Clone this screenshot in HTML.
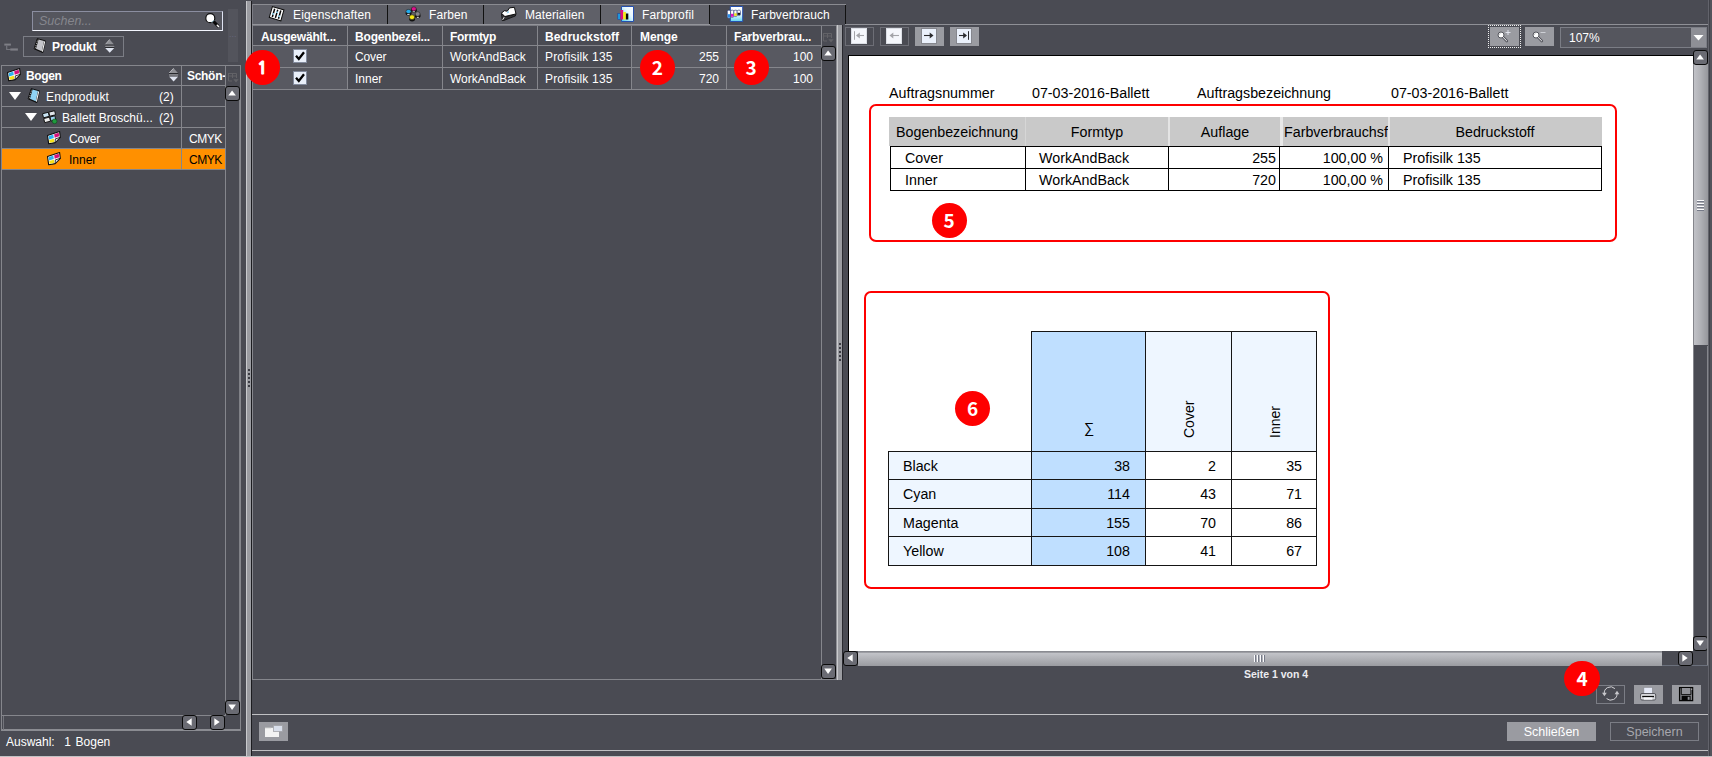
<!DOCTYPE html>
<html><head><meta charset="utf-8"><title>Farbverbrauch</title>
<style>
html,body{margin:0;padding:0}
body{width:1712px;height:757px;overflow:hidden;background:#4a4b53;position:relative;font-family:"Liberation Sans",sans-serif;font-size:12px;color:#fff}
.a{position:absolute;box-sizing:border-box}
.t{position:absolute;white-space:pre;line-height:14px}
.b{font-weight:bold}
.gl{position:absolute;background:#85868c}
.arr{position:absolute;box-sizing:border-box;width:15px;height:15px;border:1.5px solid #0a0a0a;border-radius:3px;background:#6a6b73}
.arr svg{position:absolute;left:0;top:0}
.circ{position:absolute;width:35.200px;height:35.200px;border-radius:50%;background:#fe0000;color:#fff;font-weight:bold;font-size:19px;line-height:33.500px;text-align:center;font-family:"Noto Sans CJK SC","Liberation Sans",sans-serif}
.rep{color:#000;font-size:14.27px;line-height:16px}
</style></head><body>

<!-- LEFT PANEL -->
<div id="left">
<div class="a" style="left:32px;top:11px;width:191px;height:20px;background:#55565e;border:1px solid;border-color:#8b8ea0 #dfe3f2 #f4f6ff #8b8ea0"></div>
<div class="t" style="left:39px;top:14px;font-style:italic;font-size:12.500px;color:#85868d">Suchen...</div>
<svg class="a" style="left:203px;top:12px" width="18" height="18" viewBox="0 0 18 18"><path d="M10.800 9.800 L15 14" stroke="#080808" stroke-width="3" stroke-linecap="round"/><circle cx="7.300" cy="6.200" r="4.500" fill="#fff" stroke="#101010" stroke-width="1.200"/><path d="M8.500 10.200a4.500 4.500 0 0 0 2.600-2" stroke="#7fa9b8" stroke-width="1" fill="none"/><path d="M14.300 13.300l1.200 1.200" stroke="#fff" stroke-width="1.600" stroke-linecap="round"/></svg>
<div class="a" style="left:228px;top:9px;width:10px;height:53px;background:#53545c"></div>
<div class="t" style="left:229px;top:27px;font-size:9px;color:#63657a;letter-spacing:0">...</div>
<svg class="a" style="left:4px;top:42px" width="15" height="10" viewBox="0 0 15 10"><path d="M.3 2.600h6.600" stroke="#7e7f86" stroke-width="2" fill="none"/><path d="M2.700 3.600v3.900h4" stroke="#74757d" stroke-width="1.200" fill="none"/><path d="M6.300 7.500h7.600" stroke="#7e7f86" stroke-width="2.200" fill="none"/></svg>
<div class="a" style="left:23px;top:36px;width:101px;height:21px;border:1px solid #7b7d85"></div>
<svg class="a" style="left:33px;top:38px" width="14" height="16" viewBox="0 0 14 16"><path d="M4.300 .700 L12.400 2.900 L9.800 14.600 L1.100 10.800 Z" fill="#111" stroke="#0a0a0a" stroke-width=".9" stroke-linejoin="round"/><path d="M5.600 1.600 L11 3.100 L8.700 13.300 L3 10.800 Z" fill="#c4c5ca"/><path d="M2.100 10.400 L4.900 1.400" stroke="#e8e8e8" stroke-width=".7" stroke-dasharray="1.300 1"/><path d="M11.700 3.300 L9.400 13.700" stroke="#f4f4f4" stroke-width="1.100"/></svg>
<div class="t b" style="left:52px;top:40px;letter-spacing:-.12px">Produkt</div>
<svg class="a" style="left:104px;top:38px" width="12" height="16" viewBox="0 0 12 16"><path d="M1.200 6.700 L5.700 1.400 L10.300 6.700Z" fill="#8e8f95"/><path d="M1.400 6.400 L5.700 1.400" stroke="#c8c9ce" stroke-width=".8"/><path d="M1.200 7.100h9.100M1.200 9.600h9.100" stroke="#15151a" stroke-width=".9"/><rect x="1.200" y="7.600" width="9.100" height="1.500" fill="#8e8f95"/><path d="M1.200 10.100 L5.700 14.800 L10.300 10.100Z" fill="#dfe4f0"/></svg>

<!-- tree table -->
<div class="a" style="left:1px;top:65px;width:240px;height:666px;border:1px solid #85868c;border-bottom:2px solid #8b8c92"></div>
<div class="gl" style="left:3px;top:716px;width:1px;height:14px;background:#74757c"></div>
<div class="a" style="left:2px;top:149px;width:224px;height:20px;background:#ff9000"></div>
<div class="gl" style="left:2px;top:85px;width:224px;height:1px"></div>
<div class="gl" style="left:2px;top:106px;width:224px;height:1px"></div>
<div class="gl" style="left:2px;top:127px;width:224px;height:1px"></div>
<div class="gl" style="left:2px;top:148px;width:224px;height:1px"></div>
<div class="gl" style="left:2px;top:169px;width:224px;height:1px"></div>
<div class="gl" style="left:181px;top:66px;width:1px;height:104px"></div>
<div class="gl" style="left:225px;top:66px;width:1px;height:650px"></div>
<div class="gl" style="left:2px;top:715px;width:224px;height:1px"></div>
<div class="gl" style="left:239px;top:100px;width:1px;height:602px;background:#808187"></div>

<svg class="a" style="left:5px;top:67px" width="17" height="17" viewBox="0 0 17 17" id="bogico"><path d="M2.500 5.500 L14.600 1.500 L15.300 7.300 L10.200 12.600 L3.700 13.800 Z" fill="#fff" stroke="#0c0c0c" stroke-width="1.100" stroke-linejoin="round"/><path d="M3.600 6.200 L8.300 4.600 L8.800 8 L4.100 9.400Z" fill="#2fb1ee"/><path d="M9.200 4.300 L13.700 2.800 L14.200 6.300 L9.700 7.700Z" fill="#d5107c"/><path d="M4.200 10.100 L8.900 8.700 L9.300 11.900 L4.700 12.800Z" fill="#f6e21a"/><path d="M15.300 7.300 L10.200 12.600 L10.300 8.900 Z" fill="#e9e9e9" stroke="#0c0c0c" stroke-width=".8" stroke-linejoin="round"/></svg>
<div class="t b" style="left:26px;top:69px;letter-spacing:-.38px">Bogen</div>
<svg class="a" style="left:168px;top:67px" width="12" height="16" viewBox="0 0 12 16"><path d="M1 6.300 L5.600 1.300 L10.200 6.300Z" fill="#8e8f95"/><path d="M1.200 6 L5.600 1.300" stroke="#c8c9ce" stroke-width=".8"/><path d="M1 6.700h9.200M1 9.200h9.200" stroke="#15151a" stroke-width=".9"/><rect x="1" y="7.200" width="9.200" height="1.500" fill="#8e8f95"/><path d="M1 9.600 L5.600 14.600 L10.200 9.600Z" fill="#dfe4f0"/></svg>
<div class="t b" style="left:187px;top:69px;width:38px;overflow:hidden;letter-spacing:-.3px">Schön-</div>
<svg class="a" style="left:227px;top:72px" width="13" height="12" viewBox="0 0 13 12"><path d="M1 1.500h8.500M1 4h8.500M1.500 1.500v7.500h3.500M5.500 1.500v4.500M9.500 1.500v4.500" stroke="#626267" fill="none" stroke-width="1"/><path d="M6.300 7.300h5.400l-2.700 3.200z" fill="#626267"/></svg>

<svg class="a" style="left:8px;top:91px" width="14" height="10" viewBox="0 0 14 10"><path d="M1 1h12L7 9z" fill="#fff"/></svg>
<svg class="a" style="left:27px;top:88px" width="14" height="16" viewBox="0 0 14 16"><path d="M4.300 .700 L12.400 2.900 L9.800 14.600 L1.100 10.800 Z" fill="#111" stroke="#0a0a0a" stroke-width=".9" stroke-linejoin="round"/><path d="M5.600 1.600 L11 3.100 L8.700 13.300 L3 10.800 Z" fill="#8fd3f4"/><path d="M2.100 10.400 L4.900 1.400" stroke="#e8e8e8" stroke-width=".7" stroke-dasharray="1.300 1"/><path d="M11.700 3.300 L9.400 13.700" stroke="#f4f4f4" stroke-width="1.100"/></svg>
<div class="t" style="left:46px;top:90px;letter-spacing:.17px">Endprodukt</div>
<div class="t" style="left:159px;top:90px">(2)</div>

<svg class="a" style="left:24px;top:112px" width="14" height="10" viewBox="0 0 14 10"><path d="M1 1h12L7 9z" fill="#fff"/></svg>
<svg class="a" style="left:42px;top:109px" width="17" height="17" viewBox="0 0 17 17"><g transform="rotate(-14 8 8)"><rect x="1.5" y="3" width="6" height="4.2" fill="#c9e4f4" stroke="#111" stroke-width=".9"/><rect x="8" y="3" width="6" height="4.2" fill="#dfe3e8" stroke="#111" stroke-width=".9"/><rect x="1.5" y="8" width="6" height="4.2" fill="#eee" stroke="#111" stroke-width=".9"/><rect x="8" y="8" width="5" height="4.2" fill="#9fd0ee" stroke="#111" stroke-width=".9"/></g><circle cx="12.6" cy="12.3" r="2.4" fill="#1f9a3d" stroke="#0b4d1c" stroke-width=".6"/></svg>
<div class="t" style="left:62px;top:111px">Ballett Broschü...</div>
<div class="t" style="left:159px;top:111px">(2)</div>

<svg class="a" style="left:45px;top:130px" width="17" height="17" viewBox="0 0 17 17"><path d="M2.500 5.500 L14.600 1.500 L15.300 7.300 L10.200 12.600 L3.700 13.800 Z" fill="#fff" stroke="#0c0c0c" stroke-width="1.100" stroke-linejoin="round"/><path d="M3.600 6.200 L8.300 4.600 L8.800 8 L4.100 9.400Z" fill="#2fb1ee"/><path d="M9.200 4.300 L13.700 2.800 L14.200 6.300 L9.700 7.700Z" fill="#d5107c"/><path d="M4.200 10.100 L8.900 8.700 L9.300 11.900 L4.700 12.800Z" fill="#f6e21a"/><path d="M15.300 7.300 L10.200 12.600 L10.300 8.900 Z" fill="#e9e9e9" stroke="#0c0c0c" stroke-width=".8" stroke-linejoin="round"/></svg>
<div class="t" style="left:69px;top:132px;letter-spacing:-.18px">Cover</div>
<div class="t" style="left:189px;top:132px;letter-spacing:-.5px">CMYK</div>

<svg class="a" style="left:45px;top:151px" width="17" height="17" viewBox="0 0 17 17"><path d="M2.500 5.500 L14.600 1.500 L15.300 7.300 L10.200 12.600 L3.700 13.800 Z" fill="#fff" stroke="#0c0c0c" stroke-width="1.100" stroke-linejoin="round"/><path d="M3.600 6.200 L8.300 4.600 L8.800 8 L4.100 9.400Z" fill="#2fb1ee"/><path d="M9.200 4.300 L13.700 2.800 L14.200 6.300 L9.700 7.700Z" fill="#d5107c"/><path d="M4.200 10.100 L8.900 8.700 L9.300 11.900 L4.700 12.800Z" fill="#f6e21a"/><path d="M15.300 7.300 L10.200 12.600 L10.300 8.900 Z" fill="#e9e9e9" stroke="#0c0c0c" stroke-width=".8" stroke-linejoin="round"/></svg>
<div class="t" style="left:69px;top:153px;color:#000">Inner</div>
<div class="t" style="left:189px;top:153px;color:#000;letter-spacing:-.5px">CMYK</div>

<div class="arr" style="left:225px;top:86px"><svg width="12" height="12" viewBox="0 0 12 12"><path d="M2.300 8.600 L6.100 3.400 L9.900 8.600Z" fill="#fff"/></svg></div>
<div class="arr" style="left:225px;top:700px"><svg width="12" height="12" viewBox="0 0 12 12"><path d="M2.300 3.600 L6.100 8.900 L9.900 3.600Z" fill="#fff"/></svg></div>
<div class="arr" style="left:182px;top:715px"><svg width="12" height="12" viewBox="0 0 12 12"><path d="M8.700 2.200 L3.300 6 L8.700 9.800Z" fill="#fff"/></svg></div>
<div class="arr" style="left:210px;top:715px"><svg width="12" height="12" viewBox="0 0 12 12"><path d="M3.300 2.200 L8.700 6 L3.300 9.800Z" fill="#fff"/></svg></div>

<div class="t" style="left:6px;top:735px;word-spacing:1.400px">Auswahl:  1 Bogen</div>
</div>

<!-- splitter 1 -->
<div class="a" style="left:246px;top:1px;width:6px;height:755px;background:linear-gradient(90deg,#c9cacd 0,#c9cacd 1px,#9b9ca1 1px,#9b9ca1 5px,#1c1c20 5px,#1c1c20 6px)"></div>
<div class="a" style="left:248px;top:369px;width:2px;height:2px;background:#3c3d44;box-shadow:0 4px 0 #3c3d44,0 8px 0 #3c3d44,0 12px 0 #3c3d44,0 16px 0 #3c3d44"></div>


<!-- MIDDLE PANEL -->
<div id="mid">
<!-- tabs -->
<div class="a" style="left:252px;top:4px;width:594px;height:21px;background:#5f6068;border-top:1px solid #8a8b91"></div>
<div class="a" style="left:601px;top:5px;width:109px;height:20px;background:#65666e"></div>
<div class="a" style="left:710px;top:5px;width:135px;height:20px;background:#4a4b53"></div>
<div class="a" style="left:252px;top:4px;width:1px;height:21px;background:#7b7c84"></div>
<div class="a" style="left:387px;top:5px;width:1px;height:20px;background:#111"></div>
<div class="a" style="left:483px;top:5px;width:1px;height:20px;background:#111"></div>
<div class="a" style="left:600px;top:5px;width:1px;height:20px;background:#111"></div>
<div class="a" style="left:709px;top:5px;width:1px;height:20px;background:#111"></div>
<div class="a" style="left:845px;top:5px;width:1px;height:20px;background:#111"></div>
<div class="gl" style="left:252px;top:24px;width:458px;height:1px;background:#93949a"></div>
<div class="gl" style="left:252px;top:25px;width:584px;height:1px;background:#7a7b82"></div>
<div class="gl" style="left:845px;top:24px;width:863px;height:1px;background:#8f9096"></div>

<div class="t" style="left:293px;top:8px;letter-spacing:.16px">Eigenschaften</div>
<div class="t" style="left:429px;top:8px;letter-spacing:.08px">Farben</div>
<div class="t" style="left:525px;top:8px;letter-spacing:.07px">Materialien</div>
<div class="t" style="left:642px;top:8px;letter-spacing:.13px">Farbprofil</div>
<div class="t" style="left:751px;top:8px;letter-spacing:.05px">Farbverbrauch</div>

<!-- tab icons -->
<svg class="a" style="left:268px;top:4px" width="19" height="20" viewBox="0 0 19 20"><g transform="translate(4.400 2.600) rotate(16)"><rect x="0" y="0" width="12" height="11.300" fill="#fff" stroke="#0c0c0c" stroke-width="1"/><path d="M2.800 1.500v8.500M6 1.500v8.500M9.200 1.500v8.500" stroke="#0a0a0a" stroke-width="1.500"/><rect x="1.800" y="6" width="2" height="1.600" fill="#8fd4f0"/><rect x="5" y="3.300" width="2" height="1.600" fill="#8fd4f0"/><rect x="8.200" y="6.500" width="2" height="1.600" fill="#8fd4f0"/></g></svg>
<svg class="a" style="left:404px;top:4px" width="19" height="19" viewBox="0 0 19 19"><ellipse cx="9.800" cy="6.300" rx="3" ry="2.400" fill="#111"/><ellipse cx="4.600" cy="9.200" rx="3" ry="2.400" fill="#111"/><ellipse cx="13.600" cy="11.800" rx="3" ry="2.400" fill="#111"/><ellipse cx="8.100" cy="15" rx="3" ry="2.400" fill="#111"/><path d="M8.700 7.700h2.200M3.300 10.600l2.400-.4M12.800 13.300h2" stroke="#f4f4f4" stroke-width="1"/><ellipse cx="9.800" cy="4.900" rx="2.500" ry="2.100" fill="#e0108c" stroke="#222" stroke-width=".6"/><ellipse cx="4.500" cy="7.500" rx="2.600" ry="2.100" fill="#22aef0" stroke="#222" stroke-width=".6"/><ellipse cx="13.600" cy="10" rx="2.500" ry="2.300" fill="#858589" stroke="#222" stroke-width=".6"/><ellipse cx="8" cy="13.200" rx="2.600" ry="2.400" fill="#f8ea10" stroke="#222" stroke-width=".6"/></svg>
<svg class="a" style="left:499px;top:5px" width="19" height="18" viewBox="0 0 19 18"><path d="M2.400 8.200 L5.900 11.500 L17 8.900 L16.300 11 L5 15.400 L3.300 15.600 Z" fill="#333336" stroke="#0c0c0c" stroke-width=".8" stroke-linejoin="round"/><path d="M3.600 14.800l1.600-2.600" stroke="#f0f0f0" stroke-width="1"/><path d="M2.400 8.200 L5.300 5.700 L8.300 6.200 L10.500 2.900 L15.400 2.300 L17 8.900 L5.900 11.500 Z" fill="#fff" stroke="#0c0c0c" stroke-width="1" stroke-linejoin="round"/><path d="M7.400 8.500 L9.400 5.400 L10 7.700 Z" fill="#8fd0f0"/></svg>
<svg class="a" style="left:617px;top:5px" width="18" height="18" viewBox="0 0 18 18"><defs><linearGradient id="pg" x1="0" y1="1" x2="1" y2="0"><stop offset="0" stop-color="#4fd0f0"/><stop offset=".6" stop-color="#e8f8ff"/><stop offset="1" stop-color="#fff"/></linearGradient></defs><path d="M4.500 1.500h12v15h-12z" fill="url(#pg)" stroke="#2450b0" stroke-width="1"/><rect x=".8" y="8.500" width="2.700" height="6" fill="#1c9be0" stroke="#1a3c9a" stroke-width=".5"/><rect x="3.500" y="5" width="2.700" height="9.500" fill="#e0107c"/><rect x="6.200" y="7" width="2.700" height="7.500" fill="#f8e810"/><rect x="8.900" y="8.500" width="2.400" height="6" fill="#0a0a0a"/></svg>
<svg class="a" style="left:726px;top:5px" width="18" height="18" viewBox="0 0 18 18"><defs><linearGradient id="pg2" x1="0" y1="0" x2="0" y2="1"><stop offset="0" stop-color="#fff"/><stop offset=".5" stop-color="#eefaff"/><stop offset="1" stop-color="#5fd4f2"/></linearGradient></defs><path d="M4.300 1.500h12.400v15h-12.400z" fill="url(#pg2)" stroke="#2450b0" stroke-width="1"/><rect x="1.3" y="5.2" width="3.300" height="8.0" rx="1.200" fill="#fff" stroke="#1a2a6a" stroke-width=".6"/><rect x="1.7" y="9.2" width="2.500" height="3.5" fill="#2a8ce6"/><rect x="4.6" y="5.2" width="3.300" height="7.1" rx="1.200" fill="#fff" stroke="#1a2a6a" stroke-width=".6"/><rect x="5.0" y="8.8" width="2.500" height="3.0" fill="#e810c8"/><rect x="7.9" y="5.2" width="3.300" height="6.2" rx="1.200" fill="#fff" stroke="#1a2a6a" stroke-width=".6"/><rect x="8.3" y="8.3" width="2.500" height="2.6" fill="#f6e010"/><rect x="11.2" y="5.2" width="3.300" height="5.3" rx="1.200" fill="#fff" stroke="#1a2a6a" stroke-width=".6"/><rect x="11.6" y="7.8" width="2.500" height="2.1" fill="#111"/></svg>

<!-- table panel -->
<div class="a" style="left:252px;top:25px;width:585px;height:655px;border:1px solid #85868c;border-top:none"></div>
<div class="a" style="left:253px;top:46px;width:94px;height:43px;background:#585961"></div>
<div class="a" style="left:632px;top:46px;width:189px;height:43px;background:#585961"></div>
<div class="gl" style="left:253px;top:45px;width:568px;height:1px"></div>
<div class="gl" style="left:253px;top:67px;width:568px;height:1px"></div>
<div class="gl" style="left:253px;top:89px;width:568px;height:1px"></div>
<div class="gl" style="left:347px;top:26px;width:1px;height:64px"></div>
<div class="gl" style="left:442px;top:26px;width:1px;height:64px"></div>
<div class="gl" style="left:537px;top:26px;width:1px;height:64px"></div>
<div class="gl" style="left:631px;top:26px;width:1px;height:64px"></div>
<div class="gl" style="left:726px;top:26px;width:1px;height:64px"></div>
<div class="gl" style="left:821px;top:26px;width:1px;height:654px"></div>

<div class="t b" style="left:261px;top:30px;letter-spacing:-.18px">Ausgewählt...</div>
<div class="t b" style="left:355px;top:30px;letter-spacing:-.18px">Bogenbezei...</div>
<div class="t b" style="left:450px;top:30px;letter-spacing:-.28px">Formtyp</div>
<div class="t b" style="left:545px;top:30px;letter-spacing:0px">Bedruckstoff</div>
<div class="t b" style="left:640px;top:30px;letter-spacing:-.06px">Menge</div>
<div class="t b" style="left:734px;top:30px;letter-spacing:-.2px">Farbverbrau...</div>

<div class="t" style="left:355px;top:50px;letter-spacing:-.15px">Cover</div>
<div class="t" style="left:450px;top:50px">WorkAndBack</div>
<div class="t" style="left:545px;top:50px;letter-spacing:.17px">Profisilk 135</div>
<div class="t" style="left:660px;top:50px;width:59px;text-align:right">255</div>
<div class="t" style="left:754px;top:50px;width:59px;text-align:right">100</div>
<div class="t" style="left:355px;top:72px">Inner</div>
<div class="t" style="left:450px;top:72px">WorkAndBack</div>
<div class="t" style="left:545px;top:72px;letter-spacing:.17px">Profisilk 135</div>
<div class="t" style="left:660px;top:72px;width:59px;text-align:right">720</div>
<div class="t" style="left:754px;top:72px;width:59px;text-align:right">100</div>

<div class="a" style="left:293px;top:49px;width:14px;height:14px;background:#e9eff9;border:1px solid #828a9c"></div>
<svg class="a" style="left:294px;top:50px" width="12" height="12" viewBox="0 0 12 12"><path d="M2 5.800 L4.800 9 L10 2.300" stroke="#000" stroke-width="2.300" fill="none"/></svg>
<div class="a" style="left:293px;top:71px;width:14px;height:14px;background:#e9eff9;border:1px solid #828a9c"></div>
<svg class="a" style="left:294px;top:72px" width="12" height="12" viewBox="0 0 12 12"><path d="M2 5.800 L4.800 9 L10 2.300" stroke="#000" stroke-width="2.300" fill="none"/></svg>

<svg class="a" style="left:822px;top:32px" width="13" height="12" viewBox="0 0 13 12"><path d="M1 1.500h8.500M1 4h8.500M1.500 1.500v7.500h3.500M5.500 1.500v4.500M9.500 1.500v4.500" stroke="#626267" fill="none" stroke-width="1"/><path d="M6.300 7.300h5.400l-2.700 3.200z" fill="#626267"/></svg>
<div class="arr" style="left:821px;top:46px"><svg width="12" height="12" viewBox="0 0 12 12"><path d="M2.300 8.600 L6.100 3.400 L9.900 8.600Z" fill="#fff"/></svg></div>
<div class="arr" style="left:821px;top:664px"><svg width="12" height="12" viewBox="0 0 12 12"><path d="M2.300 3.600 L6.100 8.900 L9.900 3.600Z" fill="#fff"/></svg></div>

<div class="circ" style="left:244.6px;top:49.5px;font-family:NanumGothic,sans-serif;-webkit-text-stroke:1px #fff;font-size:17.500px;line-height:36.500px;text-indent:0">1</div>
<div class="circ" style="left:639.7px;top:49.7px">2</div>
<div class="circ" style="left:733.6px;top:49.7px">3</div>

<!-- bottom -->
<div class="a" style="left:252px;top:714px;width:1456px;height:1px;background:#c0c0c3"></div>
<div class="a" style="left:252px;top:750px;width:1456px;height:1px;background:#c0c0c3"></div>
<div class="a" style="left:259px;top:722px;width:29px;height:19px;background:#9a9ba1"></div>
<svg class="a" style="left:264px;top:724px" width="20" height="15" viewBox="0 0 20 15"><rect x="1" y="3.800" width="14" height="9.200" fill="#f3f3f3"/><path d="M1 3.800h6" stroke="#b9babd" stroke-width=".8"/><rect x="9.400" y="1.600" width="9" height="5.800" fill="#d9dfeb" stroke="#a3a4a9" stroke-width=".8"/></svg>
</div>

<!-- splitter 2 -->
<div class="a" style="left:836px;top:25px;width:7px;height:655px;background:linear-gradient(90deg,#8f9096 0,#8f9096 1px,#c9cacd 1px,#c9cacd 2px,#9b9ca1 2px,#9b9ca1 6px,#2a2a30 6px,#2a2a30 7px)"></div>
<div class="a" style="left:839px;top:343px;width:2px;height:2px;background:#3c3d44;box-shadow:0 4px 0 #3c3d44,0 8px 0 #3c3d44,0 12px 0 #3c3d44,0 16px 0 #3c3d44"></div>


<!-- RIGHT PANEL -->
<div id="right">
<!-- nav buttons -->
<div class="a" style="left:845px;top:27px;width:29px;height:19px;border:1px solid #6d6e76"></div>
<div class="a" style="left:851px;top:28px;width:16px;height:16px;background:#f5f7fc;border:1px solid #dcdfe6"></div>
<svg class="a" style="left:851px;top:28px" width="16" height="16" viewBox="0 0 16 16"><path d="M3.500 3.200v8.600" stroke="#a3a4a9" stroke-width="1"/><path d="M6 7.500h7" stroke="#a3a4a9" stroke-width="1.100"/><path d="M5 7.500l3.800-3v6z" fill="#a3a4a9"/></svg>
<div class="a" style="left:880px;top:27px;width:29px;height:19px;border:1px solid #6d6e76"></div>
<div class="a" style="left:886px;top:28px;width:16px;height:16px;background:#f5f7fc;border:1px solid #dcdfe6"></div>
<svg class="a" style="left:886px;top:28px" width="16" height="16" viewBox="0 0 16 16"><path d="M5 7.500h8" stroke="#a3a4a9" stroke-width="1.100"/><path d="M3.500 7.500l3.800-3v6z" fill="#a3a4a9"/></svg>
<div class="a" style="left:915px;top:27px;width:29px;height:19px;background:#9a9ba1"></div>
<div class="a" style="left:921px;top:28px;width:16px;height:16px;background:#eaf0fb;border:1px solid #85868d"></div>
<svg class="a" style="left:921px;top:28px" width="16" height="16" viewBox="0 0 16 16"><path d="M3 7.500h8" stroke="#2a2a2e" stroke-width="1.100"/><path d="M12.500 7.500l-3.800-3v6z" fill="#2a2a2e"/></svg>
<div class="a" style="left:950px;top:27px;width:29px;height:19px;background:#9a9ba1"></div>
<div class="a" style="left:956px;top:28px;width:16px;height:16px;background:#eaf0fb;border:1px solid #85868d"></div>
<svg class="a" style="left:956px;top:28px" width="16" height="16" viewBox="0 0 16 16"><path d="M3 7.500h7" stroke="#2a2a2e" stroke-width="1.100"/><path d="M11 7.500l-3.800-3v6z" fill="#2a2a2e"/><path d="M12.500 3.200v8.600" stroke="#2a2a2e" stroke-width="1"/></svg>

<!-- zoom controls -->
<div class="a" style="left:1488px;top:25px;width:33px;height:23px;border:1px dotted #f0f0f0"></div>
<div class="a" style="left:1490px;top:27px;width:29px;height:19px;background:#9a9ba1"></div>
<svg class="a" style="left:1496px;top:28px" width="18" height="16" viewBox="0 0 18 16"><path d="M7 9.200l3.800 3.800" stroke="#55565e" stroke-width="2.600" stroke-linecap="round"/><circle cx="5" cy="7" r="3" fill="#fff" stroke="#55565e" stroke-width="1"/><path d="M4 5.500l-1 1.200" stroke="#777" stroke-width=".8"/><path d="M7.300 9.500l3.300 3.300" stroke="#f2f2f2" stroke-width="1" stroke-linecap="round"/><path d="M9.500 4.500h5M12 2v5" stroke="#e6e9f2" stroke-width=".9"/></svg>
<div class="a" style="left:1525px;top:27px;width:29px;height:19px;background:#9a9ba1"></div>
<svg class="a" style="left:1531px;top:28px" width="18" height="16" viewBox="0 0 18 16"><path d="M7 9.200l3.800 3.800" stroke="#55565e" stroke-width="2.600" stroke-linecap="round"/><circle cx="5" cy="7" r="3" fill="#fff" stroke="#55565e" stroke-width="1"/><path d="M4 5.500l-1 1.200" stroke="#777" stroke-width=".8"/><path d="M7.300 9.500l3.300 3.300" stroke="#f2f2f2" stroke-width="1" stroke-linecap="round"/><path d="M9.500 4.500h5" stroke="#d4d6dc" stroke-width=".9"/></svg>
<div class="a" style="left:1560px;top:27px;width:147px;height:21px;background:#55565e;border:1px solid #7b7d85"></div>
<div class="a" style="left:1691px;top:28px;width:15px;height:19px;background:#8e8f96"></div>
<svg class="a" style="left:1692px;top:33px" width="13" height="9" viewBox="0 0 13 9"><path d="M1.500 2h10l-5 5.500z" fill="#fff"/></svg>
<div class="t" style="left:1569px;top:31px;font-size:12px">107%</div>

<!-- viewer -->
<div class="a" style="left:848px;top:55px;width:845px;height:596px;background:#000"></div>
<div class="a" style="left:849px;top:56px;width:844px;height:595px;background:#fff"></div>

<!-- vscroll -->
<div class="a" style="left:1693px;top:51px;width:16px;height:601px;background:#4a4b53"></div>
<div class="a" style="left:1694px;top:64px;width:14px;height:281px;background:linear-gradient(90deg,#c1c2c7 0,#b2b3b8 6px,#96979c 14px)"></div>
<div class="a" style="left:1697px;top:200px;width:7px;height:1px;background:#fbfbfd;box-shadow:0 3px 0 #fbfbfd,0 6px 0 #fbfbfd,0 9px 0 #fbfbfd,0 1px 0 #767a88,0 4px 0 #767a88,0 7px 0 #767a88,0 10px 0 #767a88"></div>
<div class="arr" style="left:1693px;top:50px"><svg width="12" height="12" viewBox="0 0 12 12"><path d="M2.300 8.600 L6.100 3.400 L9.900 8.600Z" fill="#fff"/></svg></div>
<div class="arr" style="left:1693px;top:636px"><svg width="12" height="12" viewBox="0 0 12 12"><path d="M2.300 3.600 L6.100 8.900 L9.900 3.600Z" fill="#fff"/></svg></div>
<div class="a" style="left:1707px;top:346px;width:1px;height:320px;background:#85868c"></div>
<div class="a" style="left:1693px;top:64px;width:1px;height:573px;background:#85868c"></div>
<div class="a" style="left:1662px;top:665px;width:46px;height:1px;background:#6b707c"></div>
<!-- hscroll -->
<div class="a" style="left:858px;top:651px;width:804px;height:15px;background:linear-gradient(180deg,#8a8b91 0,#8a8b91 1px,#c1c2c7 2.500px,#b3b4b9 7px,#9c9da2 14.500px,#86878d 15px)"></div>
<div class="a" style="left:1254px;top:655px;width:1px;height:7px;background:#fbfbfd;box-shadow:3px 0 0 #fbfbfd,6px 0 0 #fbfbfd,9px 0 0 #fbfbfd,1px 0 0 #767a88,4px 0 0 #767a88,7px 0 0 #767a88,10px 0 0 #767a88"></div>
<div class="arr" style="left:843px;top:651px"><svg width="12" height="12" viewBox="0 0 12 12"><path d="M8.700 2.200 L3.300 6 L8.700 9.800Z" fill="#fff"/></svg></div>
<div class="arr" style="left:1678px;top:651px"><svg width="12" height="12" viewBox="0 0 12 12"><path d="M3.300 2.200 L8.700 6 L3.300 9.800Z" fill="#fff"/></svg></div>

<div class="t b" style="left:1244px;top:667px;font-size:10.500px;color:#ececf0">Seite 1 von 4</div>

<!-- icon buttons -->
<div class="a" style="left:1596px;top:685px;width:29px;height:19px;border:1px solid #7b7d85"></div>
<svg class="a" style="left:1602px;top:686px" width="19" height="17" viewBox="0 0 19 17"><path d="M2.300 8 A6.300 6.300 0 0 1 12.900 2.600" stroke="#d4d4d8" stroke-width="1" fill="none"/><path d="M15 7.200 A6.300 6.300 0 0 1 4.600 12.600" stroke="#d4d4d8" stroke-width="1" fill="none"/><path d="M0 6.800h4.800l-2.400 3.400z" fill="#c8c8cc"/><path d="M12.600 8.200h4.800l-2.400-3.400z" fill="#c8c8cc"/></svg>
<div class="a" style="left:1634px;top:685px;width:29px;height:19px;background:#9a9ba1"></div>
<svg class="a" style="left:1640px;top:686px" width="17" height="16" viewBox="0 0 17 16"><rect x="3.800" y="1.300" width="8.600" height="7" fill="#e6eaf7" stroke="#8a8b92" stroke-width=".7"/><path d="M2 7.500h12.200a1.500 1.500 0 0 1 1.500 1.500v3.500a1.500 1.500 0 0 1-1.500 1.500h-12.200a1.500 1.500 0 0 1-1.500-1.500v-3.500a1.500 1.500 0 0 1 1.500-1.500z" fill="#d6d7db" stroke="#4c4d54" stroke-width=".9"/><rect x="2.200" y="9.900" width="11.800" height="1.300" fill="#0a0a0a"/><rect x="3.800" y="11.400" width="8.600" height="2.300" fill="#f8f9fd"/></svg>
<div class="a" style="left:1672px;top:685px;width:29px;height:19px;background:#9a9ba1"></div>
<svg class="a" style="left:1678px;top:686px" width="17" height="16" viewBox="0 0 17 16"><rect x="1.600" y="1.600" width="13" height="13" fill="#85868c" stroke="#050505" stroke-width="1.300"/><path d="M3.300 2v6.600h9.600v-6.600" stroke="#050505" stroke-width=".9" fill="#909197"/><rect x="3.600" y="9.800" width="9" height="4.600" fill="#050505"/><rect x="9.700" y="10.800" width="1.900" height="3" fill="#909197"/><rect x="13.200" y="2.600" width="1" height="1.200" fill="#d0d0d4"/></svg>

<div class="a" style="left:1507px;top:722px;width:89px;height:19px;background:#9a9ba1"></div>
<div class="t" style="left:1507px;top:725px;width:89px;text-align:center;font-size:12.500px">Schließen</div>
<div class="a" style="left:1610px;top:722px;width:89px;height:19px;border:1px solid #7b7d85"></div>
<div class="t" style="left:1610px;top:725px;width:89px;text-align:center;font-size:12.500px;color:#a6a7ad">Speichern</div>

<!-- window right edge -->
<div class="a" style="left:1708px;top:0;width:1px;height:756px;background:#62636b"></div>
<div class="a" style="left:1709px;top:0;width:1px;height:756px;background:#404148"></div>
<div class="a" style="left:1710px;top:0;width:2px;height:756px;background:#52535b"></div>
<div class="a" style="left:0;top:756px;width:1712px;height:1px;background:#c2c2c4"></div>
</div>

<!-- REPORT -->
<div id="report" class="rep">
<div class="t rep" style="left:889px;top:85px">Auftragsnummer</div>
<div class="t rep" style="left:1032px;top:85px">07-03-2016-Ballett</div>
<div class="t rep" style="left:1197px;top:85px">Auftragsbezeichnung</div>
<div class="t rep" style="left:1391px;top:85px">07-03-2016-Ballett</div>

<div class="a" style="left:868.500px;top:103.500px;width:748px;height:138.500px;border:2px solid #fe0000;border-radius:7px"></div>
<div class="a" style="left:889px;top:117px;width:713px;height:29px;background:#c9c9c9"></div>
<div class="a" style="left:1025px;top:117px;width:1px;height:29px;background:#d6d6d6"></div>
<div class="a" style="left:1168px;top:117px;width:2px;height:29px;background:#e4e4e4"></div>
<div class="a" style="left:1280px;top:117px;width:3px;height:29px;background:#e8e8e8"></div>
<div class="a" style="left:1388px;top:117px;width:2px;height:29px;background:#e4e4e4"></div>
<div class="a" style="left:890px;top:146px;width:712px;height:1px;background:#000"></div>
<div class="a" style="left:890px;top:168px;width:712px;height:1px;background:#000"></div>
<div class="a" style="left:890px;top:190px;width:712px;height:1px;background:#000"></div>
<div class="a" style="left:890px;top:146px;width:1px;height:45px;background:#000"></div>
<div class="a" style="left:1025px;top:146px;width:1px;height:45px;background:#000"></div>
<div class="a" style="left:1168px;top:146px;width:1px;height:45px;background:#000"></div>
<div class="a" style="left:1279px;top:146px;width:1px;height:45px;background:#000"></div>
<div class="a" style="left:1388px;top:146px;width:1px;height:45px;background:#000"></div>
<div class="a" style="left:1601px;top:146px;width:1px;height:45px;background:#000"></div>

<div class="t rep" style="left:896px;top:124px">Bogenbezeichnung</div>
<div class="t rep" style="left:1026px;top:124px;width:142px;text-align:center">Formtyp</div>
<div class="t rep" style="left:1170px;top:124px;width:110px;text-align:center">Auflage</div>
<div class="t rep" style="left:1284px;top:124px;width:104px;overflow:hidden">Farbverbrauchsf</div>
<div class="t rep" style="left:1389px;top:124px;width:212px;text-align:center">Bedruckstoff</div>

<div class="t rep" style="left:905px;top:150px">Cover</div>
<div class="t rep" style="left:1039px;top:150px">WorkAndBack</div>
<div class="t rep" style="left:1176px;top:150px;width:100px;text-align:right">255</div>
<div class="t rep" style="left:1283px;top:150px;width:100px;text-align:right">100,00 %</div>
<div class="t rep" style="left:1403px;top:150px">Profisilk 135</div>
<div class="t rep" style="left:905px;top:172px">Inner</div>
<div class="t rep" style="left:1039px;top:172px">WorkAndBack</div>
<div class="t rep" style="left:1176px;top:172px;width:100px;text-align:right">720</div>
<div class="t rep" style="left:1283px;top:172px;width:100px;text-align:right">100,00 %</div>
<div class="t rep" style="left:1403px;top:172px">Profisilk 135</div>
<div class="circ" style="left:931.6px;top:202.5px">5</div>

<!-- second block -->
<div class="a" style="left:863.500px;top:291px;width:466.500px;height:298px;border:2px solid #fe0000;border-radius:7px"></div>
<div class="a" style="left:1032px;top:331px;width:113px;height:234px;background:#bfdfff"></div>
<div class="a" style="left:1146px;top:331px;width:171px;height:120px;background:#eef6ff"></div>
<div class="a" style="left:889px;top:452px;width:143px;height:113px;background:#eef6ff"></div>
<div class="a" style="left:1031px;top:330.500px;width:286px;height:1px;background:#151515"></div>
<div class="a" style="left:888px;top:451px;width:429px;height:1px;background:#151515"></div>
<div class="a" style="left:888px;top:479px;width:429px;height:1px;background:#151515"></div>
<div class="a" style="left:888px;top:508px;width:429px;height:1px;background:#151515"></div>
<div class="a" style="left:888px;top:536px;width:429px;height:1px;background:#151515"></div>
<div class="a" style="left:888px;top:564.500px;width:429px;height:1px;background:#151515"></div>
<div class="a" style="left:888px;top:451px;width:1px;height:114px;background:#151515"></div>
<div class="a" style="left:1031px;top:331px;width:1px;height:234px;background:#151515"></div>
<div class="a" style="left:1145px;top:331px;width:1px;height:234px;background:#151515"></div>
<div class="a" style="left:1231px;top:331px;width:1px;height:234px;background:#151515"></div>
<div class="a" style="left:1316px;top:331px;width:1px;height:234px;background:#151515"></div>

<div class="t rep" style="left:1084px;top:420px;font-size:14.270px">∑</div>
<div class="t rep" style="left:1181px;top:438px;transform:rotate(-90deg);transform-origin:0 0;font-size:14px">Cover</div>
<div class="t rep" style="left:1267px;top:438px;transform:rotate(-90deg);transform-origin:0 0;font-size:14px">Inner</div>

<div class="t rep" style="left:903px;top:458px">Black</div>
<div class="t rep" style="left:903px;top:486px">Cyan</div>
<div class="t rep" style="left:903px;top:515px">Magenta</div>
<div class="t rep" style="left:903px;top:543px">Yellow</div>
<div class="t rep" style="left:1030px;top:458px;width:100px;text-align:right">38</div>
<div class="t rep" style="left:1030px;top:486px;width:100px;text-align:right">114</div>
<div class="t rep" style="left:1030px;top:515px;width:100px;text-align:right">155</div>
<div class="t rep" style="left:1030px;top:543px;width:100px;text-align:right">108</div>
<div class="t rep" style="left:1116px;top:458px;width:100px;text-align:right">2</div>
<div class="t rep" style="left:1116px;top:486px;width:100px;text-align:right">43</div>
<div class="t rep" style="left:1116px;top:515px;width:100px;text-align:right">70</div>
<div class="t rep" style="left:1116px;top:543px;width:100px;text-align:right">41</div>
<div class="t rep" style="left:1202px;top:458px;width:100px;text-align:right">35</div>
<div class="t rep" style="left:1202px;top:486px;width:100px;text-align:right">71</div>
<div class="t rep" style="left:1202px;top:515px;width:100px;text-align:right">86</div>
<div class="t rep" style="left:1202px;top:543px;width:100px;text-align:right">67</div>
<div class="circ" style="left:955.1px;top:391.3px">6</div>
</div>
<div class="circ" style="left:1564.4px;top:660.5px">4</div>

</body></html>
